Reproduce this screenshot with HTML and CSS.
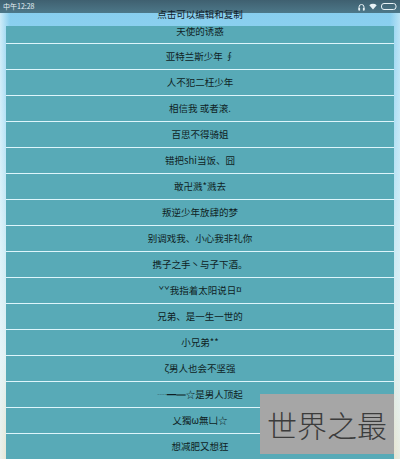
FILE: index.html
```html
<!DOCTYPE html>
<html lang="zh">
<head>
<meta charset="utf-8">
<title>点击可以编辑和复制</title>
<link rel="stylesheet" href="styles.css">
</head>
<body>
<div class="screen">
  <div class="statusbar">
    <span class="time">中午12:28</span>
    <span class="icons">
      <svg class="ic" width="7" height="8" viewBox="0 0 7 8"><path d="M1 7V4a2.5 2.5 0 0 1 5 0v3" fill="none" stroke="#e8f2f6" stroke-width="1"/><rect x="0.5" y="5" width="1.6" height="2.6" fill="#e8f2f6"/><rect x="4.9" y="5" width="1.6" height="2.6" fill="#e8f2f6"/></svg>
      <svg class="ic" width="8" height="7" viewBox="0 0 8 7"><path d="M4 6.5L0.3 2.3a5.5 5.5 0 0 1 7.4 0z" fill="#e8f2f6"/></svg>
      <svg class="ic" width="16" height="7" viewBox="0 0 16 7"><rect x="0.5" y="0.5" width="14.5" height="6" rx="2.5" fill="none" stroke="#e8f2f6" stroke-width="1"/></svg>
    </span>
  </div>
  <div class="title">点击可以编辑和复制</div>
  <ul class="list">
    <li class="row first">天使的诱惑</li>
    <li class="row">亚特兰斯少年 ∮</li>
    <li class="row">人不犯二枉少年</li>
    <li class="row">相信我 或者滚.</li>
    <li class="row">百思不得骑姐</li>
    <li class="row">错把shi当饭、囧</li>
    <li class="row">敢卍溅*溅去</li>
    <li class="row">叛逆少年放肆的梦</li>
    <li class="row">别调戏我、小心我非礼你</li>
    <li class="row">携子之手丶与子下酒。</li>
    <li class="row">ˇˇ我指着太阳说日¤</li>
    <li class="row">兄弟、是一生一世的</li>
    <li class="row">小兄弟**</li>
    <li class="row">ζ男人也会不坚强</li>
    <li class="row">┈━═☆是男人顶起</li>
    <li class="row">乂獨ω無凵☆</li>
    <li class="row">想减肥又想狂</li>
  </ul>
  <div class="watermark">世界之最</div>
</div>
</body>
</html>
```
FILE: styles.css
```css
html, body {
  margin: 0;
  padding: 0;
}
body {
  width: 400px;
  height: 459px;
  overflow: hidden;
  font-family: "Noto Sans CJK SC", "Noto Sans", sans-serif;
}
.screen {
  position: relative;
  width: 400px;
  height: 459px;
  overflow: hidden;
  background:
    linear-gradient(90deg, rgba(235, 248, 252, 0.7) 0px, rgba(235, 248, 252, 0) 10px, rgba(235, 248, 252, 0) 390px, rgba(235, 248, 252, 0.5) 400px),
    linear-gradient(180deg, #85cdee 0%, #9fd9f3 25%, #c4e7f2 55%, #dceef0 78%, #e6e0c6 100%);
}
.statusbar {
  position: absolute;
  top: 0;
  left: 0;
  right: 0;
  height: 13px;
  background: linear-gradient(180deg, #3f6070, #4d7889);
  display: flex;
  align-items: center;
  justify-content: space-between;
  padding: 0 3px 0 3px;
  box-sizing: border-box;
  z-index: 1;
}
.time {
  color: #e6f0f4;
  font-size: 7px;
  line-height: 13px;
  font-family: "Noto Sans CJK SC", "Liberation Sans", sans-serif;
}
.icons {
  display: flex;
  align-items: center;
  gap: 4px;
}
.ic {
  display: block;
}
.title {
  position: relative;
  z-index: 2;
  height: 26px;
  padding-top: 8px;
  box-sizing: border-box;
  text-align: center;
  font-size: 9.5px;
  line-height: 12px;
  color: #10202a;
}
.list {
  list-style: none;
  margin: 0 6px;
  padding: 0;
}
.row {
  height: 25px;
  border-top: 1px solid #def5fb;
  background: #58aab7;
  color: #0f1e24;
  font-size: 9.5px;
  line-height: 25px;
  text-align: center;
  white-space: nowrap;
}
.row.first {
  height: 17px;
  border-top: none;
  line-height: 10px;
}
.watermark {
  position: absolute;
  left: 260px;
  top: 394px;
  width: 134px;
  height: 60px;
  background: #a6a6a6;
  color: #3c3c3c;
  font-size: 30px;
  line-height: 60px;
  text-align: center;
  letter-spacing: 0;
  font-family: "Noto Sans CJK SC", sans-serif;
  font-weight: 300;
}
```
